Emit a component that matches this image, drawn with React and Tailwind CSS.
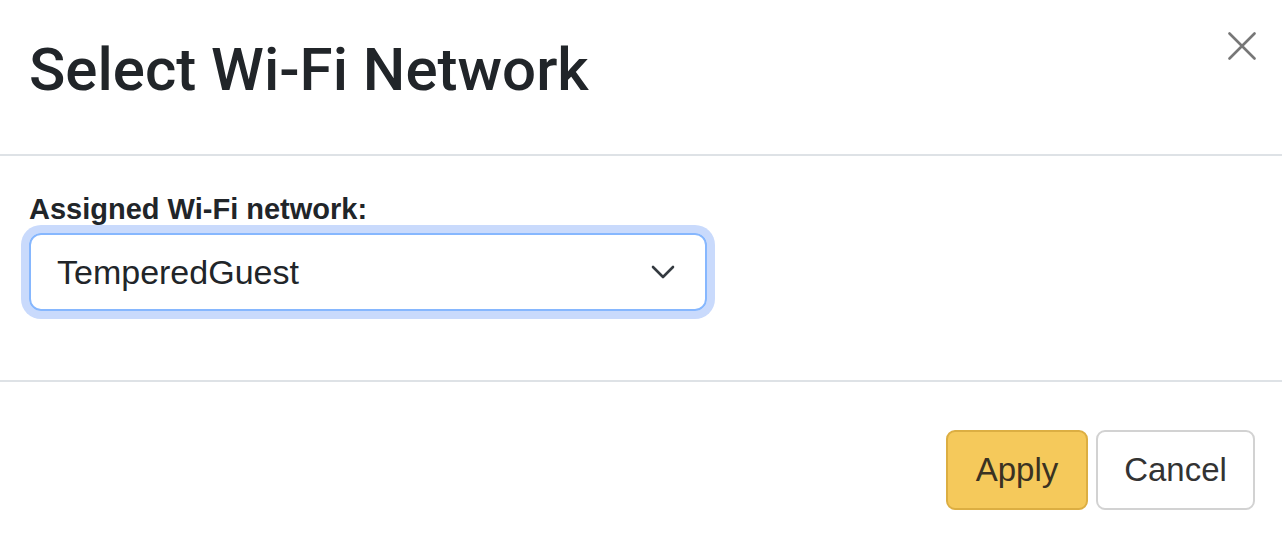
export default function App() {
  return (
    <div className="w-[1282px] h-[534px] bg-white flex flex-col text-[#212529]" style={{ fontFamily: '"Liberation Sans", Arial, sans-serif' }}>
      <div className="h-[156px] border-b-2 border-[#dee2e6] flex items-start justify-between pl-[29px] pr-[26px] pt-[32px] shrink-0">
        <h1 className="mt-[3px] text-[60px] leading-[70px] font-medium" style={{ fontFamily: 'Roboto, "Liberation Sans", sans-serif' }}>
          Select Wi-Fi Network
        </h1>
        <button className="w-[28px] h-[28px] text-[#777777]" aria-label="Close">
          <svg width="28" height="28" viewBox="0 0 28 28" fill="none" stroke="currentColor" strokeWidth="2.6" strokeLinecap="round">
            <path d="M1.5 1.5 L26.5 26.5 M26.5 1.5 L1.5 26.5" />
          </svg>
        </button>
      </div>
      <div className="h-[226px] border-b-2 border-[#dee2e6] pl-[29px] pt-[36px] shrink-0">
        <label className="block text-[29px] leading-[34px] font-bold mb-[7px]">
          Assigned Wi-Fi network:
        </label>
        <div className="w-[678px] h-[78px] border-2 border-[#86b7fe] rounded-[12px] shadow-[0_0_0_8px_#c9dafc] flex items-center justify-between pl-[26px] pr-[30px]">
          <span className="text-[34px] leading-[40px]">TemperedGuest</span>
          <svg width="24" height="14" viewBox="0 0 24 14" fill="none" stroke="#343a40" strokeWidth="2.6" strokeLinecap="round" strokeLinejoin="round">
            <path d="M2 2 L12 12 L22 2" />
          </svg>
        </div>
      </div>
      <div className="flex-1 flex justify-end items-start gap-[8px] pt-[48px] pr-[27px]">
        <button className="w-[142px] h-[80px] rounded-[9px] border-2 border-[#dcae42] bg-[#f5c95b] text-[#3a3222] text-[33px] flex items-center justify-center">
          Apply
        </button>
        <button className="w-[159px] h-[80px] rounded-[9px] border-2 border-[#d2d2d2] bg-white text-[#333333] text-[33px] flex items-center justify-center">
          Cancel
        </button>
      </div>
    </div>
  );
}
